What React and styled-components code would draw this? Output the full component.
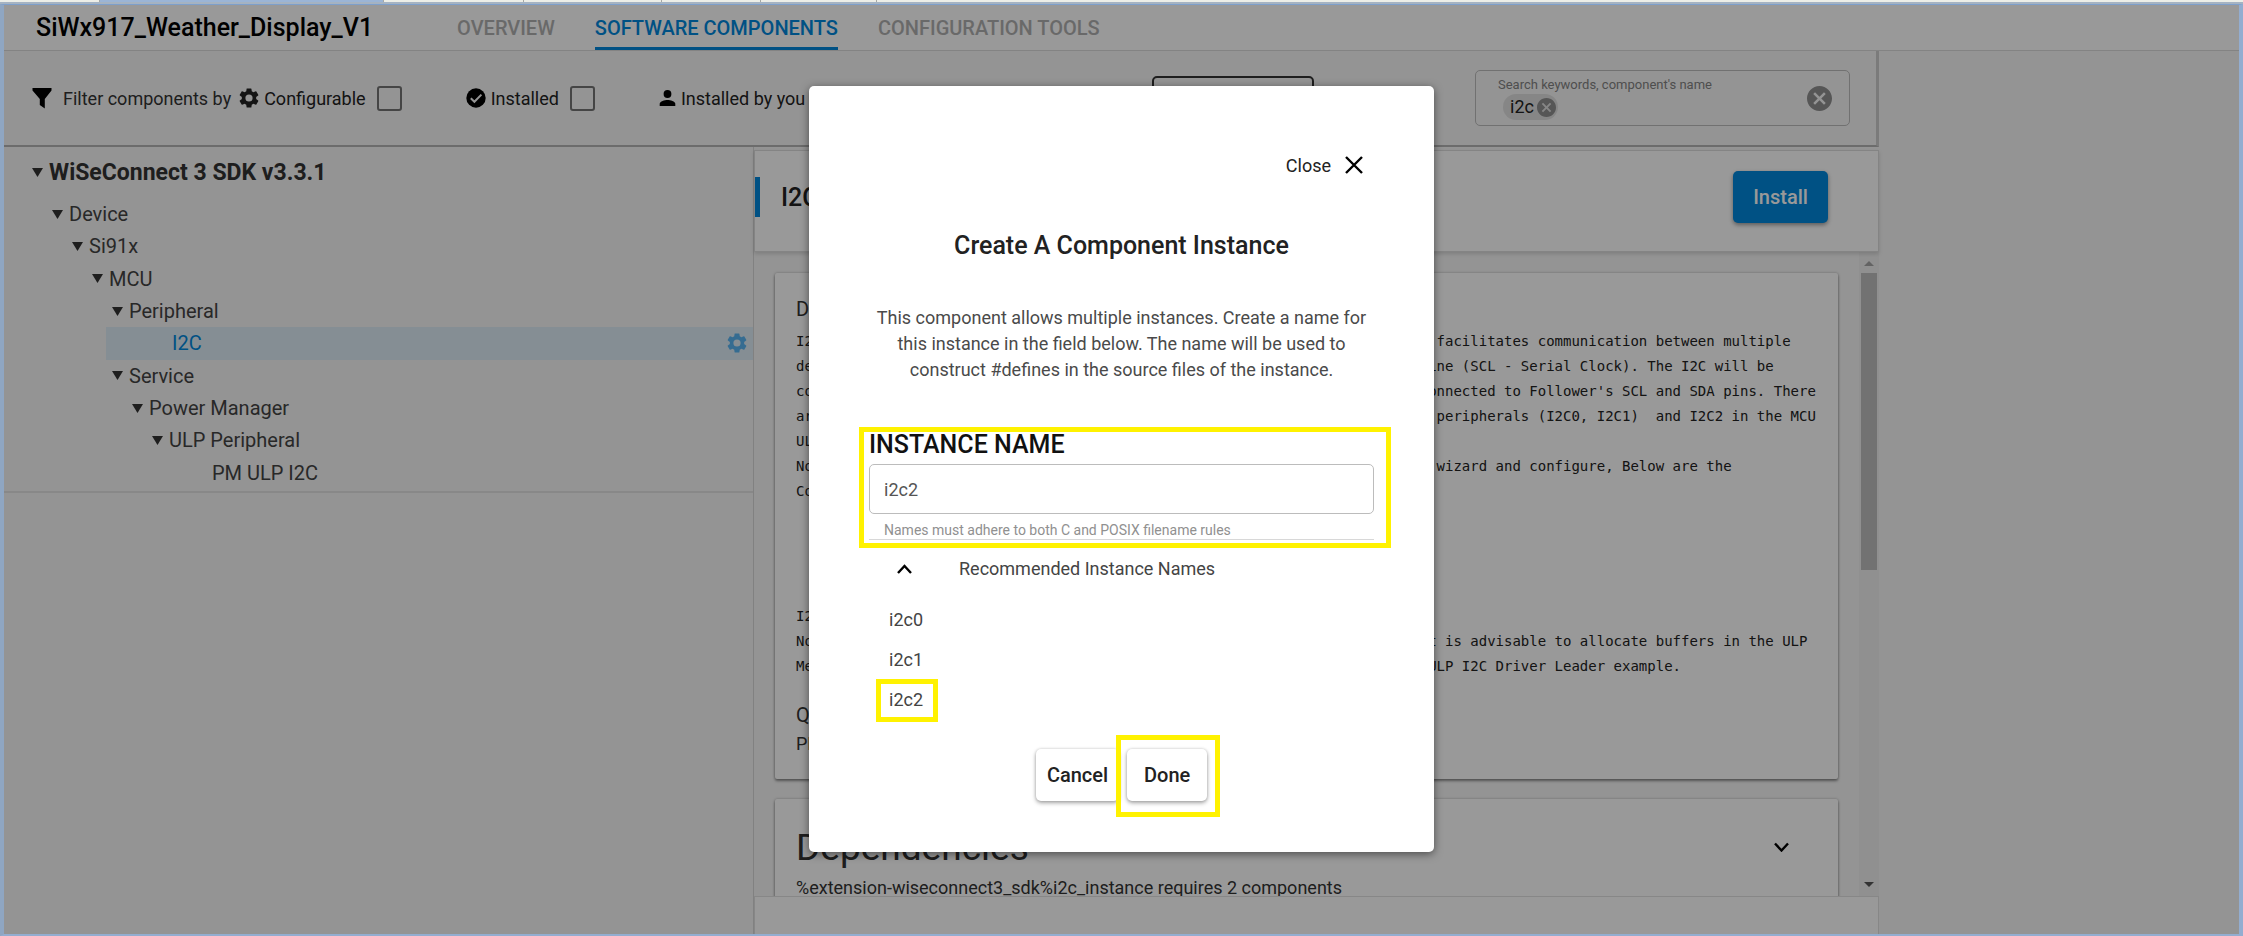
import React from "react";
import styled, { createGlobalStyle, css } from "styled-components";

const blue = "#0087dc";
const sans = `Roboto, "Liberation Sans", sans-serif`;

const GlobalStyle = createGlobalStyle`
  *, *::before, *::after { box-sizing: border-box; }
  html, body { margin: 0; background: #f7f7f7; }
  body, button, input { font-family: ${sans}; }
  h1, h2, h3, p, ul, pre { margin: 0; padding: 0; }
  ul { list-style: none; }
  svg { display: block; flex: none; }
`;

/* ---------- window frame ---------- */

const Frame = styled.div`
  display: flex;
  flex-direction: column;
  height: 100vh;
  min-height: 860px;
  overflow: hidden;
  color: #333;
`;

const TabStrip = styled.div`
  display: flex;
  flex: none;
  height: 4px;
  border-bottom: 2px solid #a5b3c2;
  background: #eceee8;
`;

const StripTab = styled.span`
  width: ${(p) => p.$width}px;
  border-right: 1px solid #a5a8a6;
  background: ${(p) => (p.$active ? "#9bb5d6" : "#eceee8")};
`;

const Window = styled.div`
  position: relative;
  display: flex;
  flex-direction: column;
  flex: 1;
  min-height: 0;
  border: solid #7d9fcb;
  border-width: 1px 4px 2px 4px;
  border-left-color: #8fa6c2;
  border-right-color: #93add0;
  border-bottom-color: #93add0;
  background: #f7f7f7;
`;

/* ---------- header ---------- */

const Header = styled.header`
  display: flex;
  flex: none;
  height: 46px;
  padding-left: 32px;
  border-bottom: 1px solid #dadada;
  background: #fff;
`;

const ProjectName = styled.h1`
  margin-right: 84px;
  color: #000;
  font-size: 25px;
  font-weight: 500;
  line-height: 46px;
`;

const Tabs = styled.nav`
  display: flex;
  gap: 40px;
`;

const Tab = styled.a`
  height: 45px;
  border-bottom: 3px solid ${(p) => (p.$active ? blue : "transparent")};
  color: ${(p) => (p.$active ? blue : "#b0b0b0")};
  font-size: 20px;
  font-weight: 500;
  line-height: 46px;
  text-decoration: none;
`;

/* ---------- toolbar ---------- */

const Main = styled.main`
  display: flex;
  flex-direction: column;
  flex: 1;
  min-height: 0;
  width: calc(100% - 360px);
`;

const Toolbar = styled.div`
  display: flex;
  align-items: center;
  flex: none;
  height: 96px;
  padding: 0 26px 0 28px;
  border-right: 3px solid #cecece;
  border-bottom: 2px solid #b4b4b4;
  color: #222;
  font-size: 18px;
  white-space: nowrap;
`;

const FilterLead = styled.span`
  display: flex;
  align-items: center;
  gap: 11px;
  margin-right: 8px;
  color: #333;
`;

const CheckLabel = styled.label`
  display: flex;
  align-items: center;
  gap: 5px;
  margin-right: 64px;
  color: #222;
`;

const Checkbox = styled.input.attrs({ type: "checkbox" })`
  appearance: none;
  width: 25px;
  height: 25px;
  margin: 0 0 0 6px;
  border: 2px solid #737373;
  border-radius: 3px;
`;

const QualityButton = styled.button`
  width: 162px;
  height: 44px;
  margin-left: 247px;
  border: 2px solid #333;
  border-radius: 5px;
  background: transparent;
  color: #333;
  font-size: 18px;
`;

const SearchBox = styled.div`
  display: flex;
  align-items: center;
  width: 375px;
  height: 56px;
  margin-left: auto;
  padding: 0 17px 0 22px;
  border: 1px solid #bcbcbc;
  border-radius: 5px;
`;

const SearchBody = styled.div`
  display: flex;
  flex: 1;
  flex-direction: column;
  min-width: 0;
  color: #838383;
  font-size: 13px;
  line-height: 18px;
`;

const ChipRow = styled.div`
  display: flex;
  padding-left: 5px;
`;

const Chip = styled.span`
  display: flex;
  align-items: center;
  gap: 3px;
  height: 26px;
  padding: 0 2px 0 7px;
  border-radius: 13px;
  background: #e0e0e0;
  color: #222;
  font-size: 18px;
`;

const SearchInput = styled.input`
  flex: 1;
  min-width: 0;
  border: 0;
  outline: 0;
  background: transparent;
  font-size: 18px;
`;

const IconButton = styled.button`
  display: flex;
  padding: 0;
  border: 0;
  background: none;
  color: ${(p) => p.$color || "#000"};
`;

/* ---------- component tree ---------- */

const Columns = styled.div`
  display: grid;
  grid-template-columns: 2fr 3fr;
  flex: 1;
  min-height: 0;
`;

const TreePane = styled.section`
  border-right: 1px solid #d8d8d8;
`;

const TreeRoot = styled.h2`
  display: flex;
  align-items: center;
  gap: 6px;
  height: 51px;
  padding-left: 28px;
  color: #333;
  font-size: 23px;
  font-weight: 700;
`;

const TreeList = styled.ul`
  display: grid;
  grid-auto-rows: 1fr;
  height: 295px;
  padding-bottom: 2px;
  border-bottom: 2px solid #e3e3e3;
`;

const TreeRow = styled.li`
  display: flex;
  align-items: center;
  gap: 6px;
  margin-left: ${(p) => p.$depth * 20 + 2}px;
  padding-left: ${(p) => (p.$leaf ? 66 : 26)}px;
  color: #444;
  font-size: 20px;

  ${(p) =>
    p.$selected &&
    css`
      background: #deedf7;
      color: ${blue};
    `}
`;

const TreeGear = styled.span`
  margin: 0 6px 0 auto;
  color: #59b5f2;
`;

/* ---------- details ---------- */

const Details = styled.section`
  display: flex;
  flex-direction: column;
  min-width: 0;
  min-height: 0;
  padding-top: 3px;
`;

const DetailsHeader = styled.div`
  z-index: 1;
  display: flex;
  align-items: center;
  flex: none;
  height: 102px;
  padding: 0 50px 8px 0;
  border: 1px solid #dcdcdc;
  background: #fff;
  box-shadow: 0 2px 4px rgba(0, 0, 0, 0.15);

  &::before {
    width: 5px;
    height: 40px;
    margin-right: 21px;
    background: ${blue};
    content: "";
  }
`;

const DetailsTitle = styled.h2`
  color: #222;
  font-size: 25px;
  font-weight: 500;
`;

const InstallButton = styled.button`
  width: 95px;
  height: 52px;
  margin-left: auto;
  border: 0;
  border-radius: 5px;
  background: ${blue};
  box-shadow: 0 2px 4px rgba(0, 0, 0, 0.4);
  color: #fff;
  font-size: 20px;
  font-weight: 500;
`;

const ScrollRegion = styled.div`
  display: flex;
  flex: 1;
  min-height: 0;
`;

const Cards = styled.div`
  display: flex;
  flex: 1;
  flex-direction: column;
  gap: 20px;
  min-width: 0;
  overflow: hidden;
  padding: 21px 21px 0 21px;
`;

const Card = styled.article`
  flex: none;
  padding: 21px;
  border-radius: 2px;
  background: #fff;
  box-shadow: 0 2px 3px rgba(0, 0, 0, 0.4), 0 0 3px rgba(0, 0, 0, 0.25);
`;

const CardHeading = styled.h3`
  color: #333;
  font-size: 20px;
  font-weight: 400;
  line-height: 30px;
`;

const Description = styled.pre`
  margin: 5px 0 21px;
  color: #222;
  font-family: "DejaVu Sans Mono", monospace;
  font-size: 14px;
  line-height: 25px;
`;

const CardText = styled.p`
  color: #333;
  font-size: 18px;
  line-height: 28px;
`;

const DependenciesHead = styled.div`
  display: flex;
  align-items: center;
  justify-content: space-between;
  height: 54px;
  padding-right: 28px;
`;

const DependenciesTitle = styled.h3`
  color: #333;
  font-size: 37px;
  font-weight: 400;
`;

const Scrollbar = styled.div`
  display: flex;
  flex-direction: column;
  align-items: center;
  width: 20px;
  padding: 9px 0;
  background: #f1f1f1;
`;

const ScrollThumb = styled.div`
  flex: 0 0 297px;
  width: 16px;
  margin: 7px 0 auto;
  background: #bfbfbf;
`;

const Footer = styled.footer`
  z-index: 1;
  flex: none;
  height: 38px;
  border: 1px solid #e2e2e2;
  border-bottom: 0;
  background: #fff;
`;

/* ---------- dialog ---------- */

const Backdrop = styled.div`
  position: absolute;
  inset: 0;
  z-index: 5;
  display: flex;
  align-items: center;
  justify-content: center;
  padding-bottom: 1px;
  background: rgba(0, 0, 0, 0.4);
`;

const Dialog = styled.div`
  width: 625px;
  padding: 63px 60px 51px;
  border-radius: 5px;
  background: #fff;
  box-shadow: 0 2px 8px rgba(0, 0, 0, 0.5);
`;

const CloseButton = styled.button`
  display: flex;
  align-items: center;
  gap: 14px;
  height: 32px;
  margin: 0 11px 0 auto;
  padding: 0;
  border: 0;
  background: none;
  color: #222;
  font-size: 18px;
`;

const DialogTitle = styled.h2`
  margin-top: 49px;
  color: #222;
  font-size: 25px;
  font-weight: 500;
  line-height: 32px;
  text-align: center;
`;

const DialogText = styled.p`
  margin-top: 43px;
  color: #4a4a4a;
  font-size: 18px;
  line-height: 26px;
  text-align: center;
`;

const highlight = css`
  &::after {
    position: absolute;
    border: 5px solid #fff200;
    content: "";
    pointer-events: none;
  }
`;

const Field = styled.div`
  position: relative;
  display: flex;
  flex-direction: column;
  margin-top: 48px;
  border-bottom: 1px solid #d8d8d8;

  ${highlight}
  &::after {
    inset: -4px -17px -9px -10px;
  }
`;

const FieldLabel = styled.label`
  color: #111;
  font-size: 25px;
  font-weight: 500;
  line-height: 28px;
`;

const TextInput = styled.input`
  height: 50px;
  margin-top: 5px;
  padding: 0 14px;
  border: 1px solid #bcbcbc;
  border-radius: 5px;
  color: #555;
  font-size: 18px;
`;

const Helper = styled.span`
  margin-top: 7px;
  padding-left: 15px;
  color: #909090;
  font-size: 14px;
  line-height: 18px;
`;

const AccordionButton = styled.button`
  display: flex;
  align-items: center;
  gap: 47px;
  width: 100%;
  height: 57px;
  padding: 0 28px;
  border: 0;
  background: none;
  color: #444;
  font-size: 18px;
`;

const NameList = styled.ul`
  margin-top: 2px;
  padding-left: 7px;
`;

const NameItem = styled.li`
  position: relative;
  width: 62px;

  ${(p) => p.$marked && highlight}
  &::after {
    inset: 0 0 -3px;
  }
`;

const NameButton = styled.button`
  height: 40px;
  padding: 0 13px;
  border: 0;
  background: none;
  color: #444;
  font-size: 18px;
`;

const Actions = styled.div`
  display: flex;
  justify-content: center;
  gap: 8px;
  margin-top: 30px;
`;

const ActionSlot = styled.span`
  position: relative;

  ${(p) => p.$marked && highlight}
  &::after {
    inset: -14px -13px -16px -11px;
  }
`;

const ActionButton = styled.button`
  min-width: 80px;
  height: 52px;
  padding: 0 11px;
  border: 0;
  border-radius: 5px;
  background: #fff;
  box-shadow: 0 2px 4px rgba(0, 0, 0, 0.35), 0 0 3px rgba(0, 0, 0, 0.15);
  color: #222;
  font-size: 20px;
  font-weight: 500;
`;

/* ---------- icons ---------- */

const FilterIcon = () => (
  <svg width="20" height="21" viewBox="0 0 20 21" aria-hidden="true">
    <path d="M.5 0h19v2.6L12.8 11v9.6L7.8 17v-6L.5 2.6z" fill="#000" />
  </svg>
);

const GearIcon = ({ size = 24 }) => (
  <svg width={size} height={size} viewBox="2 2 20 20" aria-hidden="true" fill="currentColor">
    <path d="M19.14 12.94c.04-.3.06-.61.06-.94 0-.32-.02-.64-.07-.94l2.03-1.58a.49.49 0 0 0 .12-.61l-1.92-3.32a.488.488 0 0 0-.59-.22l-2.39.96c-.5-.38-1.03-.7-1.62-.94l-.36-2.54a.484.484 0 0 0-.48-.41h-3.84c-.24 0-.43.17-.47.41l-.36 2.54c-.59.24-1.13.57-1.62.94l-2.39-.96c-.22-.08-.47 0-.59.22L2.74 8.87c-.12.21-.08.47.12.61l2.03 1.58c-.05.3-.09.63-.09.94s.02.64.07.94l-2.03 1.58a.49.49 0 0 0-.12.61l1.92 3.32c.12.22.37.29.59.22l2.39-.96c.5.38 1.03.7 1.62.94l.36 2.54c.05.24.24.41.48.41h3.84c.24 0 .44-.17.47-.41l.36-2.54c.59-.24 1.13-.56 1.62-.94l2.39.96c.22.08.47 0 .59-.22l1.92-3.32c.12-.22.07-.47-.12-.61l-2.01-1.58zM12 15.6A3.6 3.6 0 1 1 12 8.400a3.600 3.600 0 0 1 0 7.200z" />
  </svg>
);

const CheckCircleIcon = () => (
  <svg width="20" height="20" viewBox="0 0 20 20" aria-hidden="true">
    <circle cx="10" cy="10" r="9.7" fill="#000" />
    <path d="M4.8 10.2l3.6 3.6 7-7.2" fill="none" stroke="#f7f7f7" strokeWidth="2" />
  </svg>
);

const PersonIcon = () => (
  <svg width="17" height="16" viewBox="0 0 17 16" aria-hidden="true">
    <circle cx="8.5" cy="4" r="3.9" fill="#000" />
    <path d="M.7 16v-2.2c0-2.6 5-3.9 7.8-3.9s7.8 1.3 7.8 3.9V16z" fill="#000" />
  </svg>
);

const CancelIcon = ({ size }) => (
  <svg width={size} height={size} viewBox="2 2 20 20" aria-hidden="true" fill="currentColor">
    <path d="M12 2C6.47 2 2 6.47 2 12s4.47 10 10 10 10-4.47 10-10S17.53 2 12 2zm5 13.59L15.59 17 12 13.41 8.41 17 7 15.59 10.59 12 7 8.41 8.41 7 12 10.59 15.59 7 17 8.41 13.41 12 17 15.59z" />
  </svg>
);

const CrossIcon = () => (
  <svg width="18" height="18" viewBox="0 0 18 18" aria-hidden="true">
    <path d="M1 1l16 16M17 1L1 17" stroke="#000" strokeWidth="2.4" />
  </svg>
);

const Chevron = ({ up }) => (
  <svg width="15" height="10" viewBox="0 0 15 10" aria-hidden="true">
    <path d={up ? "M1 9l6.5-7 6.5 7" : "M1 1.5l6.5 7 6.5-7"} fill="none" stroke="#000" strokeWidth="2.4" />
  </svg>
);

const Caret = ({ up, color = "#333", width = 11, height = 9 }) => (
  <svg width={width} height={height} viewBox="0 0 11 9" preserveAspectRatio="none" aria-hidden="true">
    <path d={up ? "M0 9h11L5.5 0z" : "M0 0h11L5.5 9z"} fill={color} />
  </svg>
);

/* ---------- data ---------- */

const tree = [
  { name: "Device", depth: 1 },
  { name: "Si91x", depth: 2 },
  { name: "MCU", depth: 3 },
  { name: "Peripheral", depth: 4 },
  { name: "I2C", depth: 5, leaf: true, selected: true },
  { name: "Service", depth: 4 },
  { name: "Power Manager", depth: 5 },
  { name: "ULP Peripheral", depth: 6 },
  { name: "PM ULP I2C", depth: 7, leaf: true },
];

const description = [
  "I2C, the Inter-Integrated Circuit, is a synchronous serial bus protocol and facilitates communication between multiple",
  "devices over two bidirectional wires, SDA for Serial Data and another SCL line (SCL - Serial Clock). The I2C will be",
  "configured as Leader or Follower. The Leader's SCL and SDA pins are to be connected to Follower's SCL and SDA pins. There",
  "are three I2C instances available in the device: two high performance I2C   peripherals (I2C0, I2C1)  and I2C2 in the MCU",
  "ULP domain.",
  "Note: To configure the driver, install the component, open the component    wizard and configure, Below are the",
  "Configuration parameters of I2C:",
  "",
  "",
  "",
  "",
  "I2C2 is the ULP peripheral.",
  "Note: When using the ULP I2C instance in the low power PS2 state as well, it is advisable to allocate buffers in the ULP",
  "Memory. For the buffer allocation in this state, please take a look at the ULP I2C Driver Leader example.",
].join("\n");

const stripTabs = [
  { width: 100 },
  { width: 284, active: true },
  { width: 140 },
  { width: 138 },
  { width: 99 },
  { width: 116 },
];

export default function App() {
  return (
    <Frame>
      <GlobalStyle />
      <TabStrip>
        {stripTabs.map((t, i) => (
          <StripTab key={i} $width={t.width} $active={t.active} />
        ))}
      </TabStrip>
      <Window>
        <Header>
          <ProjectName>SiWx917_Weather_Display_V1</ProjectName>
          <Tabs>
            <Tab href="#overview">OVERVIEW</Tab>
            <Tab href="#components" $active>SOFTWARE COMPONENTS</Tab>
            <Tab href="#tools">CONFIGURATION TOOLS</Tab>
          </Tabs>
        </Header>

        <Main>
          <Toolbar>
            <FilterLead>
              <FilterIcon />
              Filter components by
            </FilterLead>
            <CheckLabel>
              <GearIcon size={20} />
              Configurable
              <Checkbox />
            </CheckLabel>
            <CheckLabel>
              <CheckCircleIcon />
              Installed
              <Checkbox />
            </CheckLabel>
            <CheckLabel>
              <PersonIcon />
              Installed by you
              <Checkbox />
            </CheckLabel>
            <QualityButton>Quality</QualityButton>
            <SearchBox>
              <SearchBody>
                <label htmlFor="search">Search keywords, component's name</label>
                <ChipRow>
                  <Chip>
                    i2c
                    <IconButton $color="#8f8f8f" aria-label="Remove i2c">
                      <CancelIcon size={19} />
                    </IconButton>
                  </Chip>
                  <SearchInput id="search" />
                </ChipRow>
              </SearchBody>
              <IconButton $color="#8f8f8f" aria-label="Clear search">
                <CancelIcon size={25} />
              </IconButton>
            </SearchBox>
          </Toolbar>

          <Columns>
            <TreePane>
              <TreeRoot>
                <Caret />
                WiSeConnect 3 SDK v3.3.1
              </TreeRoot>
              <TreeList>
                {tree.map((n) => (
                  <TreeRow key={n.name} $depth={n.depth} $leaf={n.leaf} $selected={n.selected}>
                    {!n.leaf && <Caret />}
                    {n.name}
                    {n.selected && (
                      <TreeGear>
                        <GearIcon size={20} />
                      </TreeGear>
                    )}
                  </TreeRow>
                ))}
              </TreeList>
            </TreePane>

            <Details>
              <DetailsHeader>
                <DetailsTitle>I2C</DetailsTitle>
                <InstallButton>Install</InstallButton>
              </DetailsHeader>
              <ScrollRegion>
                <Cards>
                  <Card>
                    <CardHeading>Description</CardHeading>
                    <Description>{description}</Description>
                    <CardHeading>Quality</CardHeading>
                    <CardText>PRODUCTION</CardText>
                  </Card>
                  <Card>
                    <DependenciesHead>
                      <DependenciesTitle>Dependencies</DependenciesTitle>
                      <IconButton aria-label="Expand dependencies">
                        <Chevron />
                      </IconButton>
                    </DependenciesHead>
                    <CardText>%extension-wiseconnect3_sdk%i2c_instance requires 2 components</CardText>
                  </Card>
                </Cards>
                <Scrollbar>
                  <Caret up color="#a5a5a5" width={10} height={5} />
                  <ScrollThumb />
                  <Caret color="#555" width={10} height={5} />
                </Scrollbar>
              </ScrollRegion>
              <Footer />
            </Details>
          </Columns>
        </Main>

        <Backdrop>
          <Dialog role="dialog" aria-modal="true" aria-labelledby="dialog-title">
            <CloseButton>
              Close
              <CrossIcon />
            </CloseButton>
            <DialogTitle id="dialog-title">Create A Component Instance</DialogTitle>
            <DialogText>
              This component allows multiple instances. Create a name for this instance in the field
              below. The name will be used to construct #defines in the source files of the instance.
            </DialogText>
            <Field>
              <FieldLabel htmlFor="instance">INSTANCE NAME</FieldLabel>
              <TextInput id="instance" defaultValue="i2c2" />
              <Helper>Names must adhere to both C and POSIX filename rules</Helper>
            </Field>
            <AccordionButton aria-expanded="true">
              <Chevron up />
              Recommended Instance Names
            </AccordionButton>
            <NameList>
              {["i2c0", "i2c1", "i2c2"].map((name) => (
                <NameItem key={name} $marked={name === "i2c2"}>
                  <NameButton>{name}</NameButton>
                </NameItem>
              ))}
            </NameList>
            <Actions>
              <ActionSlot>
                <ActionButton>Cancel</ActionButton>
              </ActionSlot>
              <ActionSlot $marked>
                <ActionButton>Done</ActionButton>
              </ActionSlot>
            </Actions>
          </Dialog>
        </Backdrop>
      </Window>
    </Frame>
  );
}
